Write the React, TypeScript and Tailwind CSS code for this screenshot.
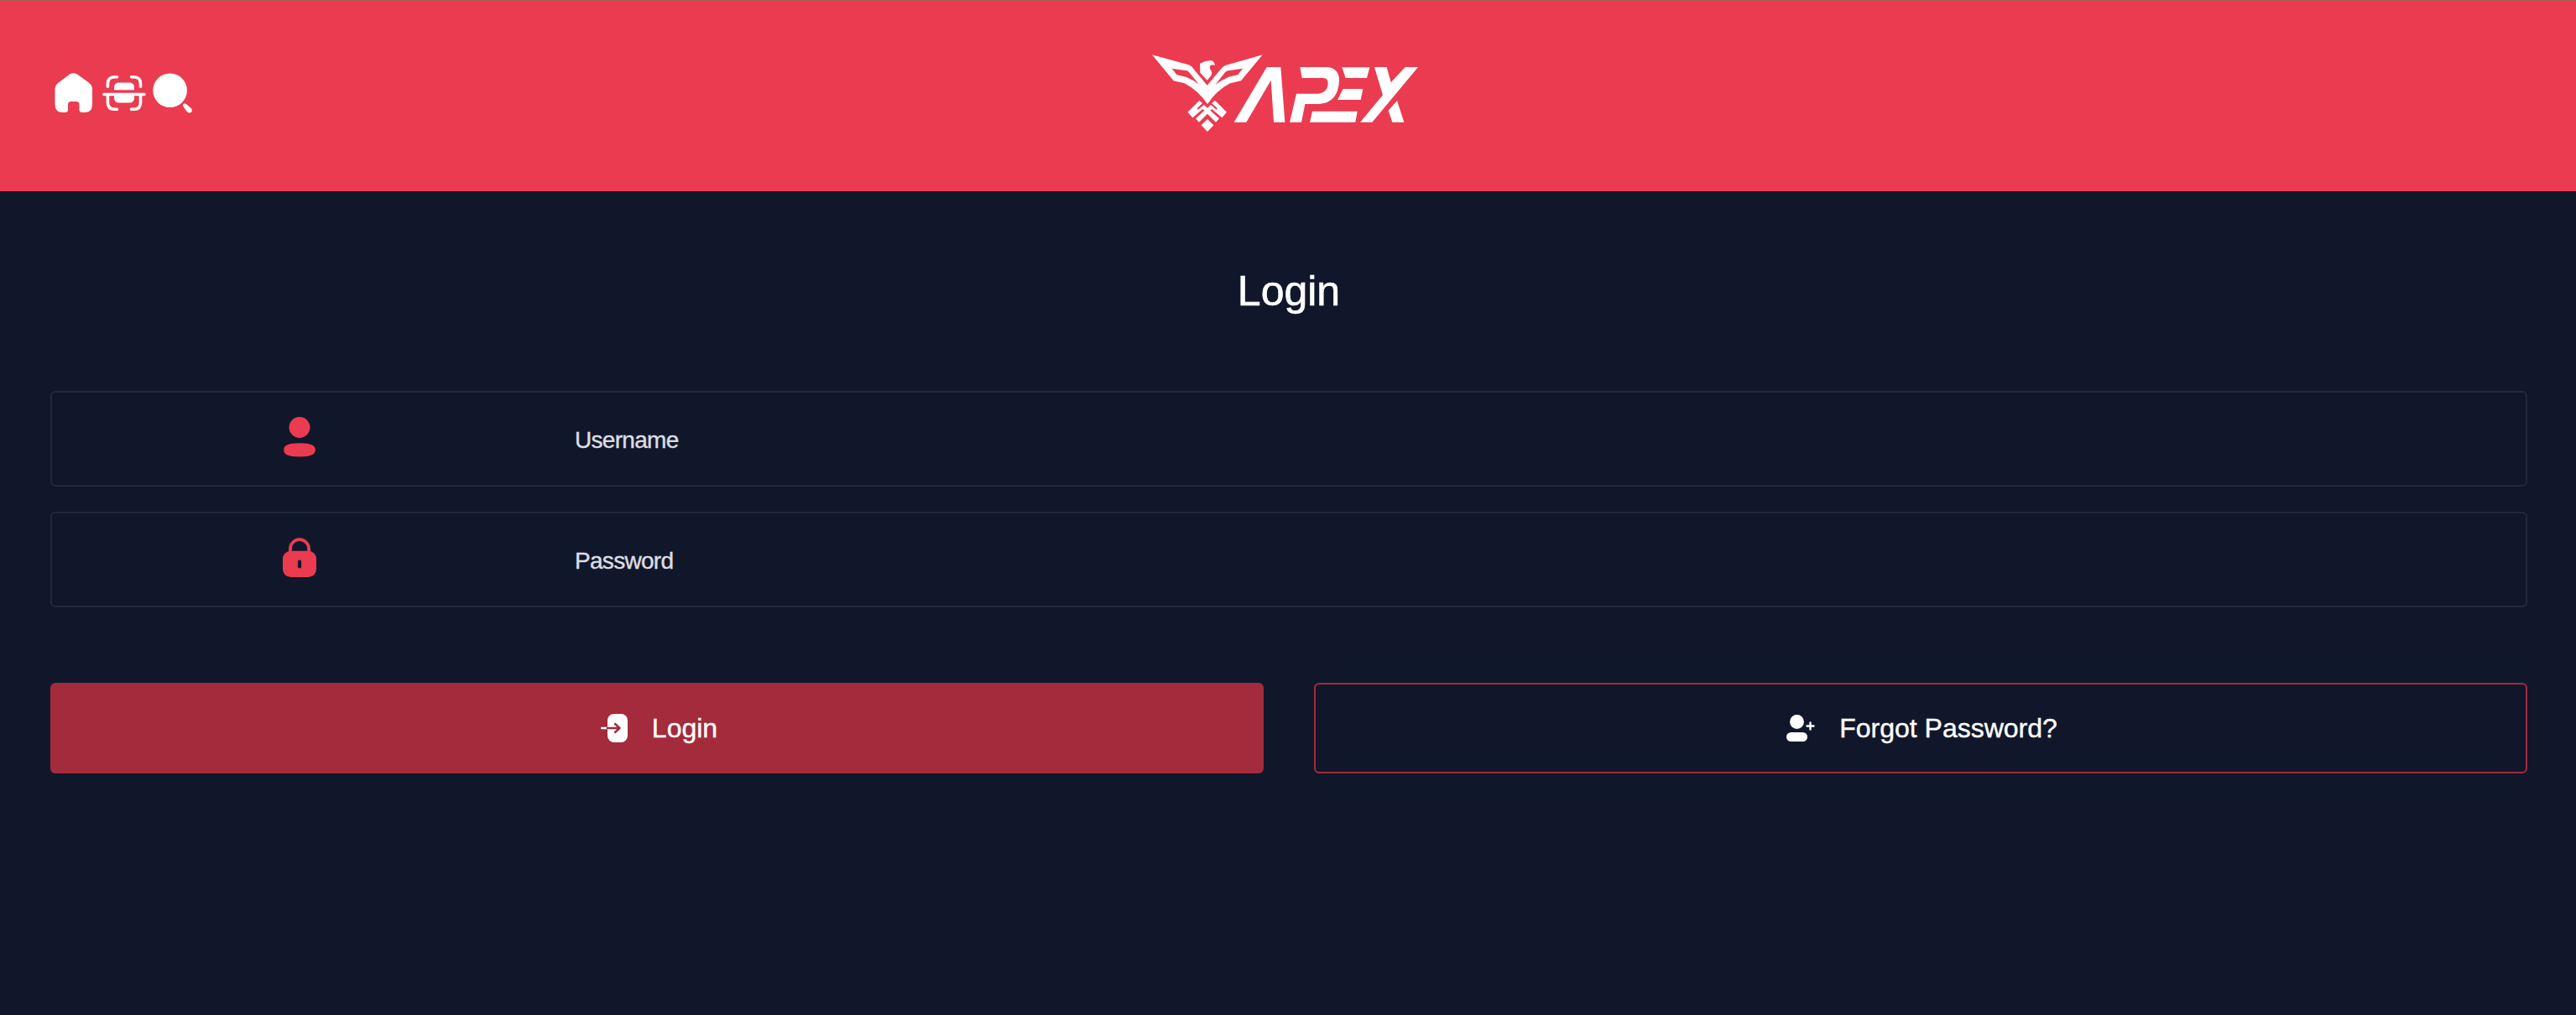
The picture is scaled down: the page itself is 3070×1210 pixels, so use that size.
import React from "react";

function HomeIcon() {
  return (
    <svg className="h-[47px] w-[45px] shrink-0" viewBox="0 0 45 47" fill="white">
      <path d="M18 1.500Q22.500 -1.200 27 1.500L40.500 11.300Q45 14.800 45 19V37.500Q45 47 35.500 47H33Q29.500 47 29.500 43.500V37.500Q29.500 34 26 34H19.500Q16 34 16 37.500V43.500Q16 47 12.500 47H10Q.5 47 .5 37.500V19Q.5 14.800 5 11.300Z" />
    </svg>
  );
}

function ScanIcon() {
  return (
    <svg className="h-[42px] w-[52px] shrink-0" viewBox="0 0 52 42" fill="none" stroke="white" strokeWidth="3.6" strokeLinecap="round">
      <path d="M6.400 13.300V10Q6.400 1.800 14.500 1.800H17.500M34.500 1.800H37.500Q45.500 1.800 45.500 10V13.300M6.400 24V32Q6.400 40.200 14.500 40.200H17.500M34.500 40.200H37.500Q45.500 40.200 45.500 32V24M1.900 22.500H49.900" />
      <path stroke="none" fill="white" d="M14 17.200V14.500Q14 8.600 20 8.600H32Q38 8.600 38 14.500V17.200ZM14 23H38V26.500Q38 32.500 32 32.500H20Q14 32.500 14 26.500Z" />
    </svg>
  );
}

function SearchIcon() {
  return (
    <svg className="h-12 w-12 shrink-0" viewBox="0 0 48 48" fill="white">
      <circle cx="20.600" cy="20.800" r="20.300" />
      <path d="M36 39.200C35.300 37.200 37.600 35.500 39.800 36.900L46 42.200C47.800 44.200 46.900 47.300 44.100 47.400C42.600 47.500 41.500 46.900 40.500 45.700Z" />
    </svg>
  );
}

function ApexLogo() {
  return (
    <svg className="h-[120px] w-[340px] blur-[0.5px]" viewBox="0 0 1020 360" fill="white" role="img" aria-label="APEX">
      <path fillRule="evenodd" d="M39 46L170 82Q181 86 187 96L236 155L286 96Q292 87 303 83L434 46L357 139L318 148Q270 173 237 222Q203 173 155 148L116 139ZM110 95L127 117L160 125Q186 135 207 152L171 108Q168 104 163 103ZM363 95L310 103Q304 105 300 109L266 152Q290 135 313 125L346 117Z" />
      <path d="M210 77Q230 66 250 66Q263 68 263 85Q258 80 249 83Q242 88 248 99Q256 111 250 121L236 137L211 110Z" />
      <path d="M208 209L219 219L200 238L204 242L224 225L237 236L249 225L269 242L273 238L252 219L264 209L306 251L289 271L253 240L247 245L279 274L267 287L237 257L207 287L195 274L226 245L220 240L184 271L166 251ZM237 276L259 298L237 321L215 298Z" />
      <path d="M449 90H499L514 287H474L464 137L376 287H332Z" />
      <path d="M568 90H666Q708 94 708 139Q704 217 638 222H586L573 287H531L555 185H635Q665 181 668 151Q670 130 651 129H575Z" />
      <path d="M718 91H817L807 129H731ZM722 168H793L785 207H702ZM612 248H773L766 287H603Z" />
      <path d="M834 90H878L893 145L944 90H990L826 287H783L864 190ZM915 210L940 287H898L884 245Z" />
    </svg>
  );
}

function UserIcon() {
  return (
    <svg className="h-12 w-[38px]" viewBox="0 0 38 48" fill="#eb3b50">
      <ellipse cx="19" cy="12.500" rx="12.500" ry="12.500" />
      <path d="M.2 39.300C.2 34 5 31.300 19 31.300S37.800 34 37.800 39.300S33 47.500 19 47.500S.2 44.800 .2 39.300Z" />
    </svg>
  );
}

function LockIcon() {
  return (
    <svg className="h-12 w-10" viewBox="0 0 40 48">
      <path d="M8.900 17V13.500A11.100 11.300 0 0 1 31.100 13.500V17" fill="none" stroke="#eb3b50" strokeWidth="3.800" />
      <rect y="15.800" width="40" height="31.200" rx="9.500" fill="#eb3b50" />
      <rect x="17.900" y="26.500" width="4.200" height="10" rx="2" fill="#11172b" />
    </svg>
  );
}

function EnterIcon() {
  return (
    <svg className="h-[34px] w-8 shrink-0" viewBox="0 0 32 34">
      <rect x="8" width="24" height="34" rx="8" fill="white" />
      <path d="M1.200 17H8" stroke="white" strokeWidth="2.400" strokeLinecap="round" />
      <path d="M8 17H22.500M17 12L22.500 17L17 22" fill="none" stroke="#a32b3c" strokeWidth="2.400" strokeLinecap="round" strokeLinejoin="round" />
    </svg>
  );
}

function UserPlusIcon() {
  return (
    <svg className="h-8 w-[34px] shrink-0" viewBox="0 0 34 32" fill="white">
      <circle cx="12.500" cy="8.500" r="8.400" />
      <rect y="21" width="25" height="11" rx="5.500" />
      <path d="M28.500 9.500V17.500M24.500 13.500H32.500" stroke="white" strokeWidth="2.400" strokeLinecap="round" />
    </svg>
  );
}

function Field({ icon, label, type }: { icon: React.ReactNode; label: string; type: string }) {
  return (
    <div className="flex h-[114px] items-center rounded-md border-2 border-[#23283a]">
      <div className="flex w-[590px] shrink-0 justify-center pb-1">{icon}</div>
      <input
        type={type}
        aria-label={label}
        placeholder={label}
        className="h-full min-w-0 grow bg-transparent pt-1 pl-[33px] text-[28px] tracking-[-0.7px] text-white outline-none [-webkit-text-stroke:0.4px_#dcdde1] placeholder:text-[#dcdde1]"
      />
    </div>
  );
}

export default function App() {
  return (
    <div className="min-h-[1210px] w-full bg-[#11172b] font-['Liberation_Sans',Arial,sans-serif] text-white">
      <header className="grid h-[228px] grid-cols-[1fr_340px_1fr] border-t-2 border-[#b15a56] bg-[#eb3b50]">
        <nav className="flex items-start pt-[85px] pl-[65px]">
          <HomeIcon />
          <div className="mt-[3px] ml-3">
            <ScanIcon />
          </div>
          <div className="ml-2">
            <SearchIcon />
          </div>
        </nav>
        <div className="-ml-[5px] pt-12">
          <ApexLogo />
        </div>
      </header>
      <main className="pr-[58px] pl-[60px]">
        <h1 className="pt-[89px] text-center text-[50px] leading-[60px] [-webkit-text-stroke:0.6px_white]">Login</h1>
        <form className="pt-[89px]" onSubmit={(e) => e.preventDefault()}>
          <div className="flex flex-col gap-[30px]">
            <Field icon={<UserIcon />} label="Username" type="text" />
            <Field icon={<LockIcon />} label="Password" type="password" />
          </div>
          <div className="mt-[90px] grid grid-cols-2 gap-[60px] text-[32px] [-webkit-text-stroke:0.4px_white]">
            <button className="flex h-[108px] items-center justify-center gap-[29px] rounded-md bg-[#a32b3c] pl-[5px]">
              <EnterIcon />
              <span>Login</span>
            </button>
            <button type="button" className="flex h-[108px] items-center justify-center gap-[29px] rounded-md border-2 border-[#a32b3c] pl-[3px]">
              <UserPlusIcon />
              <span>Forgot Password?</span>
            </button>
          </div>
        </form>
      </main>
    </div>
  );
}
